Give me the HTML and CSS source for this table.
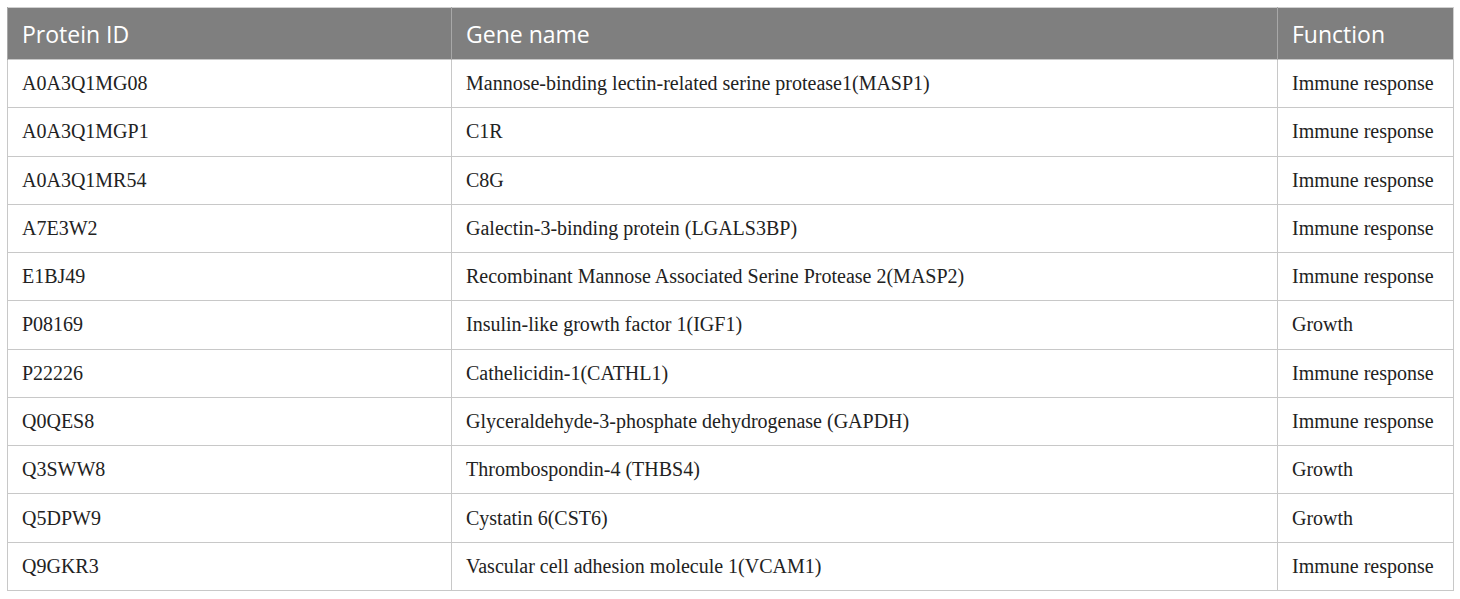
FILE: index.html
```html
<!DOCTYPE html>
<html>
<head>
<meta charset="utf-8">
<link rel="stylesheet" href="styles.css">
</head>
<body>
<table class="data">
  <colgroup>
    <col class="c1">
    <col class="c2">
    <col class="c3">
  </colgroup>
  <thead>
    <tr><th>Protein ID</th><th>Gene name</th><th>Function</th></tr>
  </thead>
  <tbody>
    <tr><td>A0A3Q1MG08</td><td>Mannose-binding lectin-related serine protease1(MASP1)</td><td>Immune response</td></tr>
    <tr><td>A0A3Q1MGP1</td><td>C1R</td><td>Immune response</td></tr>
    <tr><td>A0A3Q1MR54</td><td>C8G</td><td>Immune response</td></tr>
    <tr><td>A7E3W2</td><td>Galectin-3-binding protein (LGALS3BP)</td><td>Immune response</td></tr>
    <tr><td>E1BJ49</td><td>Recombinant Mannose Associated Serine Protease 2(MASP2)</td><td>Immune response</td></tr>
    <tr><td>P08169</td><td>Insulin-like growth factor 1(IGF1)</td><td>Growth</td></tr>
    <tr><td>P22226</td><td>Cathelicidin-1(CATHL1)</td><td>Immune response</td></tr>
    <tr><td>Q0QES8</td><td>Glyceraldehyde-3-phosphate dehydrogenase (GAPDH)</td><td>Immune response</td></tr>
    <tr><td>Q3SWW8</td><td>Thrombospondin-4 (THBS4)</td><td>Growth</td></tr>
    <tr><td>Q5DPW9</td><td>Cystatin 6(CST6)</td><td>Growth</td></tr>
    <tr><td>Q9GKR3</td><td>Vascular cell adhesion molecule 1(VCAM1)</td><td>Immune response</td></tr>
  </tbody>
</table>
</body>
</html>
```

FILE: styles.css
```css
html, body {
  margin: 0;
  padding: 0;
  background: #ffffff;
}
body {
  padding: 7px 0 0 7px;
}
.data {
  border-collapse: collapse;
  table-layout: fixed;
  width: 1446px;
  border: 1px solid #d0d0d0;
}
.c1 { width: 444px; }
.c2 { width: 826px; }
.c3 { width: 176px; }
.data th {
  background: #7f7f7f;
  color: #ffffff;
  font-family: "Open Sans", "Noto Sans", sans-serif;
  font-weight: 400;
  font-size: 23px;
  text-align: left;
  height: 52px;
  padding: 0 14px;
  box-sizing: border-box;
  border-left: 1px solid #a8a8a8;
  vertical-align: middle;
}
.data td {
  font-family: "Liberation Serif", "Times New Roman", serif;
  font-size: 20px;
  color: #222222;
  height: 48.27px;
  padding: 0 14px;
  box-sizing: border-box;
  border: 1px solid #c8c8c8;
  vertical-align: middle;
  white-space: nowrap;
}
```
